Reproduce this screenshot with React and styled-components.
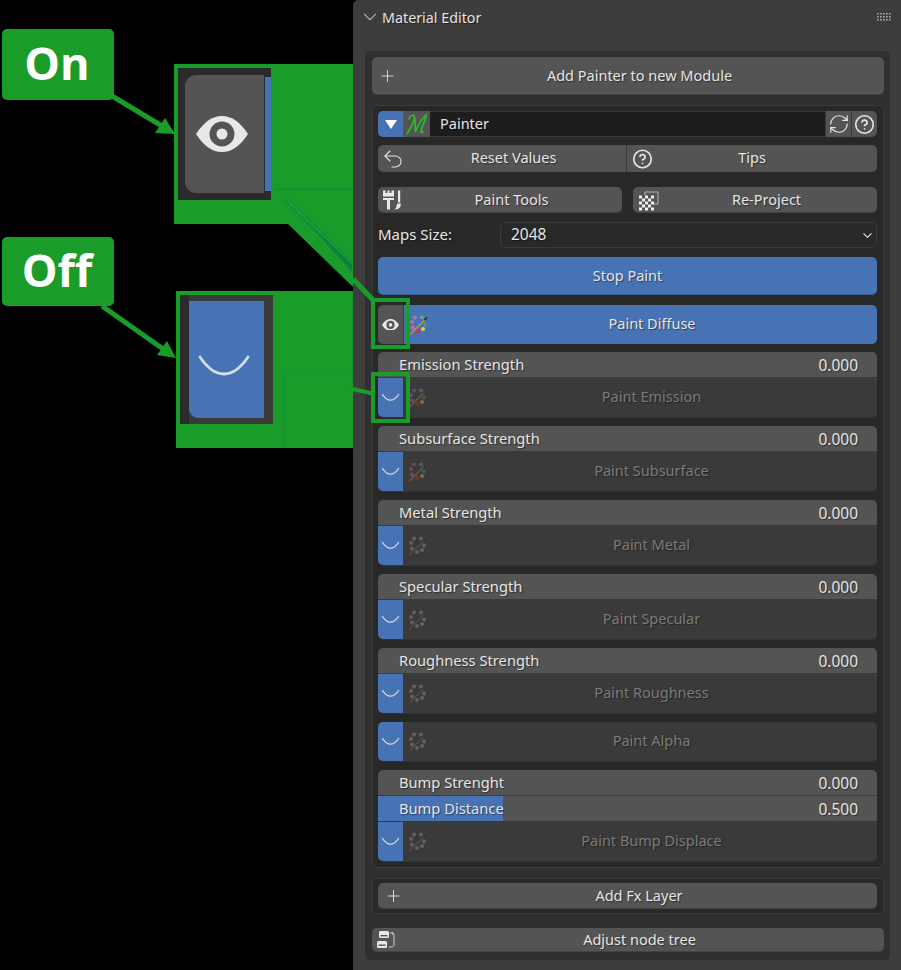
import React from "react";
import styled, { createGlobalStyle } from "styled-components";
import { Plus, Undo2, RefreshCw, CircleHelp, ChevronDown } from "lucide-react";

const Global = createGlobalStyle`
  html, body { margin: 0; padding: 0; background: #000; }
  * { box-sizing: border-box; }
`;

const Page = styled.div`
  position: relative;
  display: flex;
  width: 901px;
  height: 970px;
  overflow: hidden;
  background: #000;
  font-family: "Noto Sans", "DejaVu Sans", sans-serif;
`;
const Canvas = styled.div`
  position: relative;
  flex: 0 0 353px;
  height: 970px;
`;
const Callout = styled.div`
  position: absolute;
  z-index: 2;
  left: 2px;
  top: ${(p) => p.$top}px;
  width: 112px;
  height: ${(p) => p.$h}px;
  padding: 0 2px 5px 0;
  display: flex;
  align-items: center;
  justify-content: center;
  background: #1a9c2b;
  border-radius: 5px;
  color: #fff;
  font: 700 45px/1 "Open Sans", sans-serif;
`;
const Overlay = styled.svg`
  position: absolute;
  z-index: 1;
  left: 0;
  top: 0;
  pointer-events: none;
`;
const Thumb = styled.div`
  position: absolute;
  z-index: 2;
  left: ${(p) => p.$x}px;
  top: ${(p) => p.$y}px;
  width: 93px;
  height: ${(p) => p.$h}px;
  overflow: hidden;
`;
const ThumbOn = styled(Thumb)`
  background: #2b2b2b;
  display: flex;
  align-items: center;
  padding: 7px 0 7px 7px;
`;
const ThumbOnButton = styled.div`
  flex: 0 0 79px;
  height: 118px;
  background: #545454;
  border-radius: 11px 0 0 11px;
  display: flex;
  align-items: center;
  justify-content: center;
  padding-right: 6px;
  filter: blur(0.7px);
`;
const ThumbOnEdge = styled.div`
  flex: 0 0 7px;
  height: 114px;
  margin-left: 1px;
  background: #4772b3;
  filter: blur(0.4px);
`;
const ThumbOff = styled(Thumb)`
  background: #3a3a3a;
  border-left: 9px solid #2b2b2b;
  padding: 6px 9px 6px 0;
`;
const ThumbOffButton = styled.div`
  width: 75px;
  height: 117px;
  background: #4772b3;
  border-radius: 0 0 0 9px;
  display: flex;
  align-items: center;
  justify-content: center;
  padding: 12px 6px 0 0;
  filter: blur(0.7px);
`;

const Panel = styled.div`
  flex: 0 0 548px;
  height: 970px;
  background: #3d3d3d;
  border-radius: 5px 0 0 0;
  padding: 0 11px 0 12px;
  color: #e6e6e6;
  font-size: 14.5px;
  text-shadow: 1px 1px 1px rgba(0, 0, 0, 0.45);
`;
const PanelHeader = styled.div`
  height: 34px;
  margin-bottom: 17px;
  display: flex;
  align-items: center;
  color: #e4e4e4;
`;
const HeaderChevron = styled(ChevronDown)`
  margin-left: -6px;
`;
const Title = styled.span`
  margin-left: 1px;
  flex: 1;
  font-size: 14.3px;
`;
const GripSlot = styled.span`
  display: flex;
  margin-right: -2px;
`;
const Body = styled.div`
  height: 909px;
  background: #303030;
  border-radius: 5px;
  padding: 6px 6px 0 7px;
  display: flex;
  flex-direction: column;
`;
const Btn = styled.div`
  position: relative;
  display: flex;
  align-items: center;
  justify-content: center;
  height: ${(p) => p.$h || 26}px;
  margin-top: ${(p) => p.$mt || 0}px;
  padding: 0 0 2px ${(p) => (p.$icon ? 23 : 0)}px;
  flex: ${(p) => (p.$grow ? 1 : "none")};
  background: ${(p) => (p.$blue ? "#4772b3" : "#545454")};
  border-radius: 5px;
  box-shadow: inset 0 -1px 0 rgba(0, 0, 0, 0.18);
`;
const BtnIcon = styled.span`
  position: absolute;
  left: ${(p) => p.$left || 6}px;
  top: 50%;
  transform: translateY(-50%);
  display: flex;
  color: #e6e6e6;
`;
const Module = styled.div`
  height: ${(p) => p.$h}px;
  margin-top: ${(p) => p.$mt || 0}px;
  background: #282828;
  border: 1px solid #3a3a3a;
  border-radius: 5px;
  padding: ${(p) => p.$pad || "5px 6px 0 5px"};
`;
const Row = styled.div`
  display: flex;
  height: ${(p) => p.$h || 26}px;
  margin-top: ${(p) => p.$mt || 0}px;
  gap: ${(p) => p.$gap || 0}px;
`;
const Toggle = styled.div`
  flex: 0 0 25px;
  display: flex;
  align-items: center;
  justify-content: center;
  background: ${(p) => (p.$on ? "#545454" : "#4772b3")};
  border-radius: ${(p) => p.$radius || "5px 0 0 5px"};
`;
const LogoCell = styled.div`
  flex: 0 0 27px;
  display: flex;
  align-items: center;
  justify-content: center;
  background: #545454;
`;
const NameField = styled.div`
  flex: 1;
  display: flex;
  align-items: center;
  padding: 0 0 2px 10px;
  background: #1d1d1d;
  border-top: 1px solid #3a3a3a;
  border-bottom: 1px solid #3a3a3a;
`;
const IconCell = styled.div`
  flex: 0 0 26px;
  display: flex;
  align-items: center;
  justify-content: center;
  background: #545454;
  border-left: 1px solid #3a3a3a;
  border-radius: ${(p) => p.$radius || "0"};
`;
const Segment = styled.div`
  position: relative;
  flex: ${(p) => (p.$w ? `0 0 ${p.$w}px` : 1)};
  display: flex;
  align-items: center;
  justify-content: center;
  padding: 0 0 3px ${(p) => (p.$icon ? 23 : 0)}px;
  background: #545454;
  border-radius: ${(p) => p.$radius};
  ${(p) => p.$divider && "border-left: 1px solid #3a3a3a;"}
`;
const SizeLabel = styled.div`
  flex: 0 0 122px;
  display: flex;
  align-items: center;
  padding-bottom: 2px;
  font-size: 15px;
`;
const Select = styled.div`
  flex: 1;
  display: flex;
  align-items: center;
  justify-content: space-between;
  padding: 0 1px 0 10px;
  border: 1px solid #3a3a3a;
  border-radius: 5px;
  background: #282828;
`;
const SelectValue = styled.span`
  font-size: 15.5px;
  padding-bottom: 2px;
`;
const PaintMain = styled.div`
  position: relative;
  flex: 1;
  display: flex;
  align-items: center;
  justify-content: center;
  padding: 0 0 3px 23px;
  background: #4772b3;
  border-radius: 0 5px 5px 0;
  border-left: 1px solid #3a3a3a;
`;
const Slider = styled.div`
  position: relative;
  height: 26px;
  display: flex;
  align-items: center;
  justify-content: space-between;
  padding: 0 19px 1px 21px;
  background: #545454;
  border-radius: ${(p) => p.$radius || "5px 5px 0 0"};
  border-bottom: 1px solid #3a3a3a;
  overflow: hidden;
  font-size: 14.7px;
`;
const SliderFill = styled.div`
  position: absolute;
  left: 0;
  top: 0;
  bottom: 0;
  background: #4772b3;
`;
const SliderText = styled.span`
  position: relative;
`;
const SliderValue = styled.span`
  position: relative;
  padding-top: 1px;
  font-size: 15.5px;
`;
const Section = styled.div`
  margin-top: 8px;
  display: flex;
  flex-direction: column;
`;
const DisabledRow = styled.div`
  display: flex;
  height: 40px;
  background: #3a3a3a;
  border-radius: ${(p) => p.$radius || "0 0 5px 5px"};
  overflow: hidden;
  border-bottom: 1px solid #333;
`;
const DisabledMain = styled.div`
  position: relative;
  flex: 1;
  display: flex;
  align-items: center;
  justify-content: center;
  padding: 0 0 3px 23px;
  color: #7b7b7b;
  text-shadow: 1px 1px 1px rgba(0, 0, 0, 0.4);
`;
const PaletteSlot = styled.span`
  position: absolute;
  left: 5px;
  top: 50%;
  transform: translateY(-50%);
  display: flex;
  opacity: ${(p) => (p.$dim ? 0.36 : 1)};
`;

const Eye = ({ w = 16, bg = "#545454" }) => (
  <svg width={w} height={(w * 36) / 52} viewBox="0 0 52 36">
    <path d="M0 18C8 6 16 0 26 0s18 6 26 18C44 30 36 36 26 36S8 30 0 18Z" fill="#e8e8e8" />
    <circle cx="26" cy="18" r="12.5" fill={bg} />
    <circle cx="26" cy="18" r="5.5" fill="#e8e8e8" />
  </svg>
);
const Smile = ({ w = 17, sw = 1.1 }) => (
  <svg width={w} height={w * 0.4} viewBox="0 0 50 20" fill="none" style={{ overflow: "visible" }}>
    <path d="M1 1C9 13 17 18 25 18S41 13 49 1" stroke="#d3dcea" strokeWidth={(sw * 50) / w} strokeLinecap="round" />
  </svg>
);
const dotPos = [[6, 3], [13, 3], [16, 10], [14, 14.5], [9, 16.5], [4, 13], [3, 7.5]];
const dotColors = ["#b07aa0", "#5aa89a", "#3aa86a", "#e8d030", "#e03030", "#e05aa0", "#a07ab0"];
const Palette = ({ colored }) => (
  <svg width="21" height="21" viewBox="0 0 21 21">
    {dotPos.map(([x, y], i) => (
      <circle key={i} cx={x} cy={y} r="2" fill={colored ? dotColors[i] : "#a8a8a8"} />
    ))}
    <path d="M1 20 18 3" stroke={colored ? "#c9923f" : "#7a6a50"} strokeWidth="1.4" />
    <path d="M15.5 5.5 18 3" stroke="#222" strokeWidth="1.6" />
  </svg>
);
const Help = () => <CircleHelp size={21} strokeWidth={1.9} color="#e6e6e6" />;

const MLogo = () => (
  <svg width="22" height="21" viewBox="0 0 22 21" fill="none" stroke="#20cc20" strokeWidth="1.5" strokeLinecap="round">
    <path d="M3 5C4 1 8 0 8.5 3 9 7 4 15 1 20" />
    <path d="M8.5 3c1 5 1 10 .8 15C12 11 16 5 20 1c0 6-5 12-5 17 0 1 1 1 2-.5" />
  </svg>
);
const ToolsIcon = () => (
  <svg width="21" height="21" viewBox="0 0 21 21" fill="#e8e8e8">
    <path d="M2 1h2.5v2.5h2V1h2v2.5h2V1H13v6H2Z" />
    <rect x="2" y="8.5" width="11" height="2" />
    <rect x="6" y="10.5" width="3" height="9.5" />
    <rect x="17" y="1" width="2.2" height="12" />
    <path d="M16.5 14h3.2c.5 3-1 6-6.5 6 2.5-1 2-4 3.3-6Z" />
  </svg>
);
const ReprojectIcon = () => (
  <svg width="22" height="22" viewBox="0 0 22 22">
    <path d="M7 6V3h13v12h-5" fill="none" stroke="#b4b4b4" strokeWidth="1" />
    {[0, 1, 2, 3, 4].flatMap((r) =>
      [0, 1, 2, 3, 4].map((c) =>
        (r + c) % 2 === 0 ? (
          <rect key={`${r}-${c}`} x={1 + c * 3} y={6.5 + r * 3} width="3" height="3" fill="#eee" />
        ) : null
      )
    )}
  </svg>
);
const NodesIcon = () => (
  <svg width="20" height="20" viewBox="0 0 20 20" fill="none">
    <rect x="3" y="1" width="10" height="7" rx="1.5" fill="#e8e8e8" />
    <rect x="4.5" y="5" width="7" height="1.4" fill="#545454" />
    <rect x="1" y="11" width="10" height="7" rx="1.5" fill="#e8e8e8" />
    <rect x="2.5" y="14.5" width="7" height="1.4" fill="#545454" />
    <path d="M14 3h2c1 0 2 1 2 2v9c0 2-1 3-3 3h-2" stroke="#d0d0d0" strokeWidth="1" />
    <path d="M16 2l2 1.5-2 1" stroke="#d0d0d0" strokeWidth="0.8" />
  </svg>
);
const Grip = () => (
  <svg width="15" height="8" viewBox="0 0 15 8" fill="#a8a8a8">
    {[0, 1, 2].flatMap((r) =>
      [0, 1, 2, 3, 4].map((c) => <rect key={`${r}${c}`} x={c * 3} y={r * 3} width="1.6" height="1.6" />)
    )}
  </svg>
);

const sections = [
  { label: "Emission Strength", paint: "Paint Emission", colored: true },
  { label: "Subsurface Strength", paint: "Paint Subsurface", colored: true },
  { label: "Metal Strength", paint: "Paint Metal" },
  { label: "Specular Strength", paint: "Paint Specular" },
  { label: "Roughness Strength", paint: "Paint Roughness" },
];

const PaintRow = ({ label, colored, radius }) => (
  <DisabledRow $radius={radius}>
    <Toggle $radius="0 0 0 5px">
      <Smile />
    </Toggle>
    <DisabledMain>
      <PaletteSlot $dim>
        <Palette colored={colored} />
      </PaletteSlot>
      {label}
    </DisabledMain>
  </DisabledRow>
);

const G = "#1a9c2b";
const DG = "#0c7a45";

const Annotations = () => (
  <Overlay width="901" height="970" viewBox="0 0 901 970">
    <polygon fill={G} points="174,64 353,64 353,287 288,224 174,224" />
    <polygon fill={G} points="176,291 353,291 353,448 176,448" />
    <path d="M353 279 373 300" stroke={G} strokeWidth="5" />
    <path d="M353 389 372 393.5" stroke={G} strokeWidth="4" />
    <path d="M112 96 167 129" stroke={G} strokeWidth="5" />
    <polygon fill={G} points="175,134 155,133 165,118" />
    <path d="M102 306 166 351" stroke={G} strokeWidth="5" />
    <polygon fill={G} points="176,358 157,355 167,341" />
    <rect x="373" y="300" width="35" height="47" fill="none" stroke={G} strokeWidth="4" />
    <rect x="373" y="374" width="35" height="47" fill="none" stroke={G} strokeWidth="4" />
    <path d="M276 189H352M288 198 352 262M282 198 352 268" stroke={DG} strokeWidth="0.7" fill="none" />
    <path d="M305 220 352 272 352 264Z" fill={DG} opacity="0.8" />
    <path d="M352.5 291V384M345 387H352M280 370H352M284 373V448" stroke={DG} strokeWidth="0.6" fill="none" opacity="0.45" />
  </Overlay>
);

export default function App() {
  return (
    <Page>
      <Global />
      <Canvas>
        <Callout $top={29} $h={71}>On</Callout>
        <Callout $top={237} $h={69}>Off</Callout>
        <ThumbOn $x={178} $y={68} $h={132}>
          <ThumbOnButton>
            <Eye w={52} />
          </ThumbOnButton>
          <ThumbOnEdge />
        </ThumbOn>
        <ThumbOff $x={180} $y={295} $h={129}>
          <ThumbOffButton>
            <Smile w={50} sw={2.8} />
          </ThumbOffButton>
        </ThumbOff>
      </Canvas>
      <Panel>
        <PanelHeader>
          <HeaderChevron size={22} strokeWidth={1.1} color="#d8d8d8" />
          <Title>Material Editor</Title>
          <GripSlot><Grip /></GripSlot>
        </PanelHeader>
        <Body>
          <Btn $h={38} $icon>
            <BtnIcon $left={6}><Plus size={19} strokeWidth={1.1} /></BtnIcon>
            Add Painter to new Module
          </Btn>
          <Module $mt={10} $h={763}>
            <Row>
              <Toggle>
                <svg width="12" height="9" viewBox="0 0 12 9"><path d="M0 0h12L6 9Z" fill="#fff" /></svg>
              </Toggle>
              <LogoCell><MLogo /></LogoCell>
              <NameField>Painter</NameField>
              <IconCell><RefreshCw size={22} strokeWidth={1.3} color="#e6e6e6" /></IconCell>
              <IconCell $radius="0 5px 5px 0"><Help /></IconCell>
            </Row>
            <Row $mt={8} $h={27}>
              <Segment $icon $radius="5px 0 0 5px">
                <BtnIcon $left={3}><Undo2 size={24} strokeWidth={1.1} /></BtnIcon>
                Reset Values
              </Segment>
              <Segment $divider $radius="0 5px 5px 0" $w={251}>
                <BtnIcon $left={5}><Help /></BtnIcon>
                Tips
              </Segment>
            </Row>
            <Row $mt={15} $gap={11}>
              <Btn $grow $icon>
                <BtnIcon $left={3}><ToolsIcon /></BtnIcon>
                Paint Tools
              </Btn>
              <Btn $grow $icon>
                <BtnIcon $left={5}><ReprojectIcon /></BtnIcon>
                Re-Project
              </Btn>
            </Row>
            <Row $mt={9}>
              <SizeLabel>Maps Size:</SizeLabel>
              <Select>
                <SelectValue>2048</SelectValue>
                <ChevronDown size={15} strokeWidth={1.9} color="#e0e0e0" />
              </Select>
            </Row>
            <Btn $blue $h={38} $mt={9}>Stop Paint</Btn>
            <Row $mt={10} $h={39}>
              <Toggle $on><Eye w={17} /></Toggle>
              <PaintMain>
                <PaletteSlot><Palette colored /></PaletteSlot>
                Paint Diffuse
              </PaintMain>
            </Row>
            {sections.map((s) => (
              <Section key={s.label}>
                <Slider>
                  <SliderText>{s.label}</SliderText>
                  <SliderValue>0.000</SliderValue>
                </Slider>
                <PaintRow label={s.paint} colored={s.colored} />
              </Section>
            ))}
            <Section>
              <PaintRow label="Paint Alpha" radius="5px" />
            </Section>
            <Section>
              <Slider>
                <SliderText>Bump Strenght</SliderText>
                <SliderValue>0.000</SliderValue>
              </Slider>
              <Slider $radius="0">
                <SliderFill style={{ width: "25%" }} />
                <SliderText>Bump Distance</SliderText>
                <SliderValue>0.500</SliderValue>
              </Slider>
              <PaintRow label="Paint Bump Displace" />
            </Section>
          </Module>
          <Module $mt={10} $h={36} $pad="4px 6px 0 5px">
            <Btn $icon>
              <BtnIcon $left={6}><Plus size={19} strokeWidth={1.1} /></BtnIcon>
              Add Fx Layer
            </Btn>
          </Module>
          <Btn $mt={14} $h={24} $icon>
            <BtnIcon $left={4}><NodesIcon /></BtnIcon>
            Adjust node tree
          </Btn>
        </Body>
      </Panel>
      <Annotations />
    </Page>
  );
}
